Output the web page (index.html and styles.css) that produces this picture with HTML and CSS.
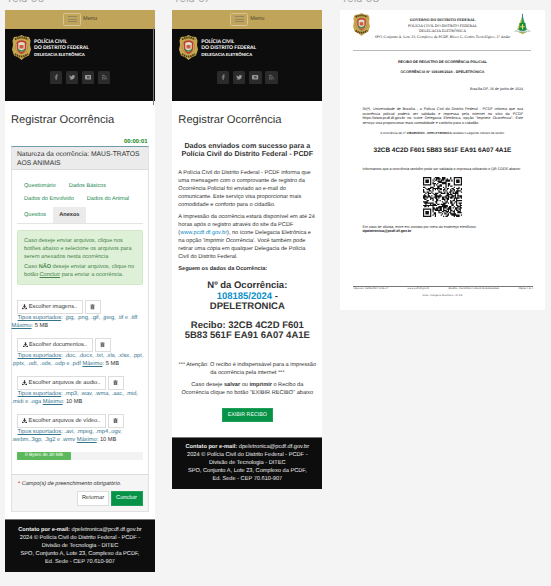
FILE: index.html
```html
<!DOCTYPE html>
<html lang="pt-BR">
<head>
<meta charset="utf-8">
<title>Delegacia Eletrônica</title>
<link rel="stylesheet" href="styles.css">
</head>
<body>
<svg class="defs" aria-hidden="true">
  <symbol id="badge" viewBox="0 0 38 50" preserveAspectRatio="none">
    <path d="M19 0 25 3 34 4 37 11 36 20 38 29 34 41 25 45 19 50 13 45 4 41 0 29 2 20 1 11 4 4 13 3Z" fill="#c6a64f"/>
    <path d="M6 9Q19 1 32 9M6 38Q19 48 32 38" fill="none" stroke="#4c3d17" stroke-width="4" stroke-dasharray="3 1.4"/>
    <ellipse cx="19" cy="24" rx="12" ry="13" fill="#d9c382" stroke="#8a7235"/>
    <path d="M11 15q8-5 16 0v12q-2 7-8 9-6-2-8-9Z" fill="#d9dfca" stroke="#c63a2c" stroke-width="3"/>
    <path d="M12 29q7 6 14 0" stroke="#3d8a4a" stroke-width="3" fill="none"/>
    <path d="M15 20h8v7h-8z" fill="#cf5b43"/>
  </symbol>
  <symbol id="df" viewBox="0 0 34 44">
    <path d="M17 0 19 12 26 34 17 36 8 34 15 12Z" fill="#2f9a55"/>
    <path d="M15 10 15 18 8 34 6 33Z" fill="#e3c83e"/>
    <path d="M16 2h2v10h-2z" fill="#47799a"/>
    <path d="M11 20h12v15H11z" fill="#138a42"/>
    <path d="M17 22v11M12.500 27.500h9" stroke="#e9dd61" stroke-width="2.200"/>
    <path d="M1 37Q9 35 10 29M33 37Q25 35 24 29" fill="none" stroke="#a9b3ac" stroke-width="1.500"/>
    <path d="M1 37h32q-8 0-12 3H13Q9 37 1 37Z" fill="#7d9b83"/>
    <path d="M12 39h10l-5 4Z" fill="#d4b73e"/>
  </symbol>
  <symbol id="download" viewBox="0 0 16 16"><path d="M6 0h4v6h4L8 12 2 6h4ZM0 11h3l3 3h4l3-3h3v5H0Z" fill="#333"/></symbol>
  <symbol id="trash" viewBox="0 0 14 16"><path d="M5 2V.8h4V2h4v2H1V2ZM2 5h10v11H2Z" fill="#555"/><path d="M5 6.500v7.500M7 6.500v7.500M9 6.500v7.500" stroke="#eee" stroke-width=".8"/></symbol>
  <symbol id="fb" viewBox="0 0 16 16"><path d="M6.500 15V9H4.500V6.500h2V4.500Q6.500 1.500 9.500 1.500h2V4H10q-1 0-1 1v1.500h2.500L11 9H9v6Z" fill="#8c8c8c"/></symbol>
  <symbol id="tw" viewBox="0 0 16 16"><path d="M1 3q3 3 6.500 3Q7 2.500 10.500 2.500q1.500 0 2.300 1L15 3l-1 2q0 8-7.500 8.500Q3 13.500 1 12q2.500 0 4-1.200-2.200-.3-2.800-2.200L1 6.500 2.500 7Q0 5.500 1 3Z" fill="#9a9a9a"/></symbol>
  <symbol id="yt" viewBox="0 0 16 16"><rect x="0" y="2.500" width="16" height="11" rx="2.500" fill="#999"/><rect x="5" y="5.500" width="6" height="5" fill="#2b2b2b"/><path d="M6.500 6v4L10 8Z" fill="#999"/></symbol>
  <symbol id="rss" viewBox="0 0 16 16"><circle cx="4" cy="12" r="1.700" fill="#888"/><path d="M2.500 7q6.500 0 6.500 6.500M2.500 3Q13 3 13 13.500" fill="none" stroke="#888" stroke-width="1.800"/></symbol>
</svg>

<main class="board">
  <section class="column col-a">
    <h2 class="label">Tela 06</h2>
    <div class="phone">
      <header>
        <div class="menubar"><span class="burger"><i></i><i></i><i></i></span><span>Menu</span></div>
        <div class="brandbar">
          <div class="brand"><svg class="badge"><use href="#badge"/></svg><div class="brandname"><b>POLÍCIA CIVIL</b><b>DO DISTRITO FEDERAL</b><b class="sub">DELEGACIA ELETRÔNICA</b></div></div>
          <div class="social"><span><svg><use href="#fb"/></svg></span><span><svg><use href="#tw"/></svg></span><span><svg><use href="#yt"/></svg></span><span><svg><use href="#rss"/></svg></span></div>
        </div>
        <i class="scroll"></i>
      </header>
      <h1>Registrar Ocorrência</h1>
      <div class="timer">00:00:01</div>
      <div class="panel">
        <div class="panel-head">Natureza da ocorrência: MAUS-TRATOS<br>AOS ANIMAIS</div>
        <div class="panel-body">
          <nav>
            <div class="tabs"><a>Questionário</a><a>Dados Básicos</a></div>
            <div class="tabs"><a>Dados do Envolvido</a><a>Dados do Animal</a></div>
            <div class="tabs last"><a>Quesitos</a><a class="active">Anexos</a></div>
          </nav>
          <div class="alert">
            <p>Caso deseje enviar arquivos, clique nos<br>botões abaixo e selecione os arquivos para<br>serem anexados nesta ocorrência</p>
            <p>Caso <b>NÃO</b> deseje enviar arquivos, clique no<br>botão <u>Concluir</u> para enviar a ocorrência.</p>
          </div>
          <div class="upload"><div class="pick"><span class="btn w1"><svg><use href="#download"/></svg>Escolher imagens..</span><span class="btn bin"><svg><use href="#trash"/></svg></span></div><p><u>Tipos suportados</u>: .jpg, .png, .gif, .jpeg, .tif e .tiff<br><u>Máximo</u>: <em>5 MB</em></p></div>
          <div class="upload"><div class="pick"><span class="btn w2"><svg><use href="#download"/></svg>Escolher documentos..</span><span class="btn bin"><svg><use href="#trash"/></svg></span></div><p><u>Tipos suportados</u>: .doc, .docx, .txt, .xls, .xlsx, .ppt,<br>.pptx, .odt, .ods, .odp e .pdf <u>Máximo</u>: <em>5 MB</em></p></div>
          <div class="upload"><div class="pick"><span class="btn w3"><svg><use href="#download"/></svg>Escolher arquivos de audio..</span><span class="btn bin"><svg><use href="#trash"/></svg></span></div><p><u>Tipos suportados</u>: .mp3, .wav, .wma, .aac, .mid,<br>.midi e .oga <u>Máximo</u>: <em>10 MB</em></p></div>
          <div class="upload"><div class="pick"><span class="btn w3"><svg><use href="#download"/></svg>Escolher arquivos de vídeo..</span><span class="btn bin"><svg><use href="#trash"/></svg></span></div><p><u>Tipos suportados</u>: .avi, .mpeg, .mp4,.ogv,<br>.webm,.3gp, .3g2 e .wmv <u>Máximo</u>: <em>10 MB</em></p></div>
          <div class="progress"><span>0 Bytes de 30 MB</span></div>
        </div>
        <div class="panel-foot">
          <p><b>*</b> Campo(s) de preenchimento obrigatório.</p>
          <div class="actions"><span class="btn">Retornar</span><span class="btn green">Concluir</span></div>
        </div>
      </div>
      <footer><b>Contato por e-mail:</b> dpeletronica@pcdf.df.gov.br<br>2024 © Polícia Civil do Distrito Federal - PCDF -<br>Divisão de Tecnologia - DITEC<br>SPO, Conjunto A, Lote 23, Complexo da PCDF,<br>Ed. Sede - CEP 70.610-907</footer>
    </div>
  </section>

  <section class="column col-b">
    <h2 class="label">Tela 07</h2>
    <div class="phone">
      <header>
        <div class="menubar"><span class="burger"><i></i><i></i><i></i></span><span>Menu</span></div>
        <div class="brandbar">
          <div class="brand"><svg class="badge"><use href="#badge"/></svg><div class="brandname"><b>POLÍCIA CIVIL</b><b>DO DISTRITO FEDERAL</b><b class="sub">DELEGACIA ELETRÔNICA</b></div></div>
          <div class="social"><span><svg><use href="#fb"/></svg></span><span><svg><use href="#tw"/></svg></span><span><svg><use href="#yt"/></svg></span><span><svg><use href="#rss"/></svg></span></div>
        </div>
      </header>
      <h1>Registrar Ocorrência</h1>
      <div class="done">
        <h3>Dados enviados com sucesso para a<br>Polícia Civil do Distrito Federal - PCDF</h3>
        <p>A Polícia Civil do Distrito Federal - PCDF informa que<br>uma mensagem com o comprovante de registro da<br>Ocorrência Policial foi enviado ao e-mail do<br>comunicante. Este serviço visa proporcionar mais<br>comodidade e conforto para o cidadão.</p>
        <p>A impressão da ocorrência estará disponível em até 24<br>horas após o registro através do site da PCDF<br>(<a>www.pcdf.df.gov.br</a>), no ícone Delegacia Eletrônica e<br>na opção 'Imprimir Ocorrência'. Você também pode<br>retirar uma cópia em qualquer Delegacia de Polícia<br>Civil do Distrito Federal.</p>
        <p><b>Seguem os dados da Ocorrência:</b></p>
        <h4>Nº da Ocorrência:<br><a>108185/2024</a> -<br>DPELETRONICA</h4>
        <h4>Recibo: 32CB 4C2D F601<br>5B83 561F EA91 6A07 4A1E</h4>
        <div class="notes">
          <p>*** Atenção: O recibo é indispensável para a impressão<br>da ocorrência pela internet ***</p>
          <p>Caso deseje <b>salvar</b> ou <b>imprimir</b> o Recibo da<br>Ocorrência clique no botão "EXIBIR RECIBO" abaixo</p>
        </div>
        <span class="btn green show">EXIBIR RECIBO</span>
      </div>
      <footer><b>Contato por e-mail:</b> dpeletronica@pcdf.df.gov.br<br>2024 © Polícia Civil do Distrito Federal - PCDF -<br>Divisão de Tecnologia - DITEC<br>SPO, Conjunto A, Lote 23, Complexo da PCDF,<br>Ed. Sede - CEP 70.610-907</footer>
    </div>
  </section>

  <section class="column col-c">
    <h2 class="label">Tela 08</h2>
    <article class="doc">
      <div class="doc-head">
        <svg class="seal"><use href="#badge"/></svg>
        <div class="org"><b>GOVERNO DO DISTRITO FEDERAL</b><span>POLÍCIA CIVIL DO DISTRITO FEDERAL</span><span>DELEGACIA ELETRÔNICA</span><span class="addr">SPO, Conjunto A, Lote 23, Complexo da PCDF, Bloco G, Centro Tecnológico, 2° Andar</span></div>
        <svg class="dflogo"><use href="#df"/></svg>
      </div>
      <div class="doc-title">RECIBO DE REGISTRO DE OCORRÊNCIA POLICIAL</div>
      <div class="doc-title second">OCORRÊNCIA Nº 108185/2024 - DPELETRONICA</div>
      <div class="date">Brasília-DF, 26 de junho de 2024</div>
      <div class="para"><p>Sr(ª). Universidade de Brasília , a Polícia Civil do Distrito Federal - PCDF informa que sua</p><p>ocorrência policial poderá ser validada e impressa pela internet no sítio da PCDF</p><p>https://www.pcdf.df.gov.br no ícone Delegacia Eletrônica, opção "Imprimir Ocorrência". Este</p><p class="end">serviço visa proporcionar mais comodidade e conforto para o cidadão.</p></div>
      <div class="number">A ocorrência de nº <b>108185/2024 - DPELETRONICA</b> recebeu o seguinte número de recibo:</div>
      <div class="code">32CB 4C2D F601 5B83 561F EA91 6A07 4A1E</div>
      <div class="inform">Informamos que a ocorrência também pode ser validada e impressa utilizando o QR CODE abaixo:</div>
      <svg class="qr" id="qr" viewBox="0 0 33 33" preserveAspectRatio="none"></svg>
      <div class="doubt">Em caso de dúvida, entre em contato por meio do endereço eletrônico:<b>dpeletronica@pcdf.df.gov.br</b></div>
      <div class="doc-foot"><span>Impresso: 26/06/2024 12:26:37</span><span>www.pcdf.df.gov.br</span><span>Brasília - Patrimônio Cultural da Humanidade</span><span>Página 1 de 1</span></div>
      <div class="source">Fonte: Delegacia Eletrônica - PCDF</div>
    </article>
  </section>
</main>
<script src="qr.js"></script>
</body>
</html>
```
FILE: styles.css
```css
* { box-sizing: border-box; }
body { margin: 0; width: 551px; height: 586px; overflow: hidden; background: #f4f4f4; font: 5.6px/8px "Liberation Sans", Arial, sans-serif; color: #333; text-rendering: geometricPrecision; }
h1, h2, h3, h4, p { margin: 0; font-weight: normal; }
.defs { position: absolute; width: 0; height: 0; }
svg { display: block; }
.board { display: flex; align-items: flex-start; white-space: nowrap; }
.column { margin-top: -9px; }
.col-a { margin-left: 5px; width: 150px; }
.col-b { margin-left: 17.3px; width: 150px; }
.col-c { margin-left: 17.7px; width: 205px; }
.label { font: 11px/14px Inter, sans-serif; height: 18.5px; color: #aaa; padding-left: 1px; }
.phone { background: #fff; }

header { position: relative; }
.menubar { height: 19.5px; background: #bfa459; display: flex; align-items: center; gap: 2px; padding-left: 58px; color: #51482d; }
.burger { width: 18px; height: 13.5px; border: 1px solid #d6c595; border-radius: 1.5px; display: flex; flex-direction: column; align-items: center; justify-content: center; gap: 1.6px; }
.burger i { width: 9px; height: 1px; background: #928560; }
.brandbar { height: 72px; background: #0d0d0d; padding: 6px 6.5px 0; }
.brand { display: flex; gap: 3.5px; }
.badge { width: 19px; height: 25px; }
.brandname { display: flex; flex-direction: column; color: #f4f4f4; font: 5px/5.6px Lato, sans-serif; padding-top: 5.2px; }
.brandname b { font-weight: 900; }
.brandname .sub { font-size: 4.3px; line-height: 7.5px; }
.social { display: flex; justify-content: center; gap: 3.7px; margin-top: 11px; }
.social span { width: 12.4px; height: 13px; border-radius: 1.5px; background: #2b2b2b; display: flex; align-items: center; justify-content: center; }
.social svg { width: 6.5px; height: 6.5px; }
.scroll { position: absolute; right: 1px; top: 18.5px; width: 1px; height: 77px; background: #777; }

h1 { font-size: 11.2px; line-height: 14px; padding: 11.5px 6px 0; }
.timer { text-align: right; font-weight: bold; color: #148a1c; padding-right: 7.5px; margin-top: 11px; height: 8.5px; line-height: 9.5px; font-size: 5.9px; }
.panel { margin: 0 6px; border: 1px solid #e2e2e2; border-top-color: #6f9bab; width: 138px; }
.panel-head { background: #ebebeb; border-bottom: 1px solid #ddd; height: 23px; padding: 3px 5px; font-size: 6.75px; line-height: 9px; }
.panel-body { padding: 9.5px 5px 0; }
.tabs { display: flex; gap: 13px; padding-left: 7px; height: 13px; line-height: 13px; color: #268a53; }
.tabs.last { height: 17px; line-height: 16px; gap: 7px; border-bottom: 1px solid #e4e4e4; margin-top: 1px; align-items: stretch; width: 126px; }
.tabs .active { background: #ebebeb; color: #333; font-weight: bold; padding: 0 6.2px; }
.alert { margin: 6px 0 0; width: 126px; height: 55px; border: 1px solid #d3e8c7; border-radius: 1.5px; background: #dff0d8; color: #478449; padding: 6.2px 6px; font-size: 5.6px; }
.alert p + p { margin-top: 2px; }
.upload { height: 38px; }
.alert + .upload { margin-top: 15.5px; height: 37.5px; }
.pick { display: flex; gap: 2px; }
.btn { display: inline-flex; align-items: center; justify-content: center; gap: 1.5px; height: 14px; border: 1px solid #ddd; background: #fff; color: #333; font-size: 5.7px; }
.btn svg { width: 5px; height: 5.6px; }
.w1 { width: 65.5px; } .w2 { width: 75.5px; } .w3 { width: 88.5px; }
.bin { width: 16px; }
.upload p { color: #34748d; font-size: 5.72px; text-indent: 6px; margin: .3px 0 0 -5.5px; }
.upload em { color: #333; font-style: normal; }
.progress { width: 126px; height: 8px; background: #f3f3f3; margin-bottom: 14px; border-radius: 1px; }
.progress span { display: block; width: 54px; height: 8px; background: #5cb85c; color: #fff; text-align: center; font-size: 4.8px; border-radius: 1px; }
.panel-foot { height: 37.5px; border-top: 1px solid #ddd; background: #f5f5f5; padding: 5px 5px 0; }
.panel-foot p { font-style: italic; font-size: 5.55px; padding-left: 1px; }
.panel-foot p b { color: #d44; font-style: normal; }
.actions { display: flex; justify-content: flex-end; gap: 1.5px; margin-top: 3.5px; padding-right: .5px; }
.actions .btn { width: 32px; height: 14.5px; }
.btn.green { background: #069348; border-color: #1f9f5a; color: #fff; }
footer { margin-top: 7.2px; height: 52.7px; background: #0d0d0d; border-top: 1px solid #777; color: #eee; text-align: center; padding-top: 5.5px; font-size: 5.65px; }

.done { padding: 15.5px 6px 0; height: 310px; }
.done h3 { font-weight: bold; font-size: 7.2px; line-height: 7.9px; text-align: center; margin: 0 -5px 11.5px; }
.done p { margin-bottom: 4px; }
.done a { color: #0a8fc9; }
.done h4 { font-size: 9.5px; line-height: 10.5px; font-weight: bold; text-align: center; margin: 8px -5px 7.5px; }
.notes { text-align: center; margin: 19px -4px 0; }
.done .show { display: flex; width: 51px; margin: 11px auto 0; font-size: 5.3px; }
.col-b footer { margin-top: 0; }

.doc { width: 205px; height: 300px; background: #fff; padding: 3px 13.5px 0; font-size: 4px; line-height: 4.5px; color: #222; }
.doc-head { display: flex; justify-content: space-between; height: 38px; border-bottom: 1px solid #bbb; }
.seal { width: 17px; height: 23px; }
.dflogo { width: 17px; height: 22px; }
.org { width: 136px; display: flex; flex-direction: column; align-items: center; padding-top: 5.5px; font: 3.85px/5.6px "Liberation Serif", serif; }
.addr { font-size: 3.83px; }
.doc-title { text-align: center; font-weight: bold; font-size: 3.6px; margin-top: 9px; }
.doc-title.second { margin-top: 6px; font-size: 3.65px; }
.date { text-align: right; margin-top: 12.5px; padding-right: 8.5px; font-size: 3.65px; }
.para { margin: 15.8px 9px 0; font-size: 3.75px; }
.para p { text-align-last: justify; white-space: normal; margin-right: -.5px; }
.para .end { text-align-last: left; }
.number { text-align: center; font-size: 3.1px; margin-top: 6.2px; }
.code { text-align: center; font-weight: bold; font-size: 6.45px; line-height: 8px; margin-top: 11px; }
.inform { margin: 12.5px 0 0 9px; font-size: 3.6px; }
.qr { width: 39px; height: 40px; margin: 4.7px 0 0 69.5px; fill: #111; }
.doubt { margin: 8px 0 0 9px; font-size: 3.63px; }
.doubt b { display: block; }
.doc-foot { margin-top: 52px; border-top: 1px solid #777; padding-top: .7px; width: 180px; display: flex; justify-content: space-between; font: 2.75px/4px "Liberation Serif", serif; }
.source { text-align: center; font: 2.75px/4px "Liberation Serif", serif; margin-top: 3px; }
```
FILE: qr.js
```javascript
const size = 33;
let seed = 7919;
let path = "";
function finder(x, y, ox, oy) {
  const dx = x - ox, dy = y - oy;
  if (dx < -1 || dy < -1 || dx > 7 || dy > 7) return null;
  const ring = Math.max(Math.abs(dx - 3), Math.abs(dy - 3));
  return ring === 3 || ring <= 1;
}
for (let y = 0; y < size; y++) {
  for (let x = 0; x < size; x++) {
    seed = (seed * 1103515245 + 12345) % 2147483648;
    let on = (seed >> 12) % 100 < 53;
    for (const [ox, oy] of [[0, 0], [size - 7, 0], [0, size - 7]]) {
      const part = finder(x, y, ox, oy);
      if (part !== null) on = part;
    }
    if (on) path += `M${x} ${y}h1v1h-1z`;
  }
}
document.getElementById("qr").innerHTML = `<path d="${path}"/>`;
```
